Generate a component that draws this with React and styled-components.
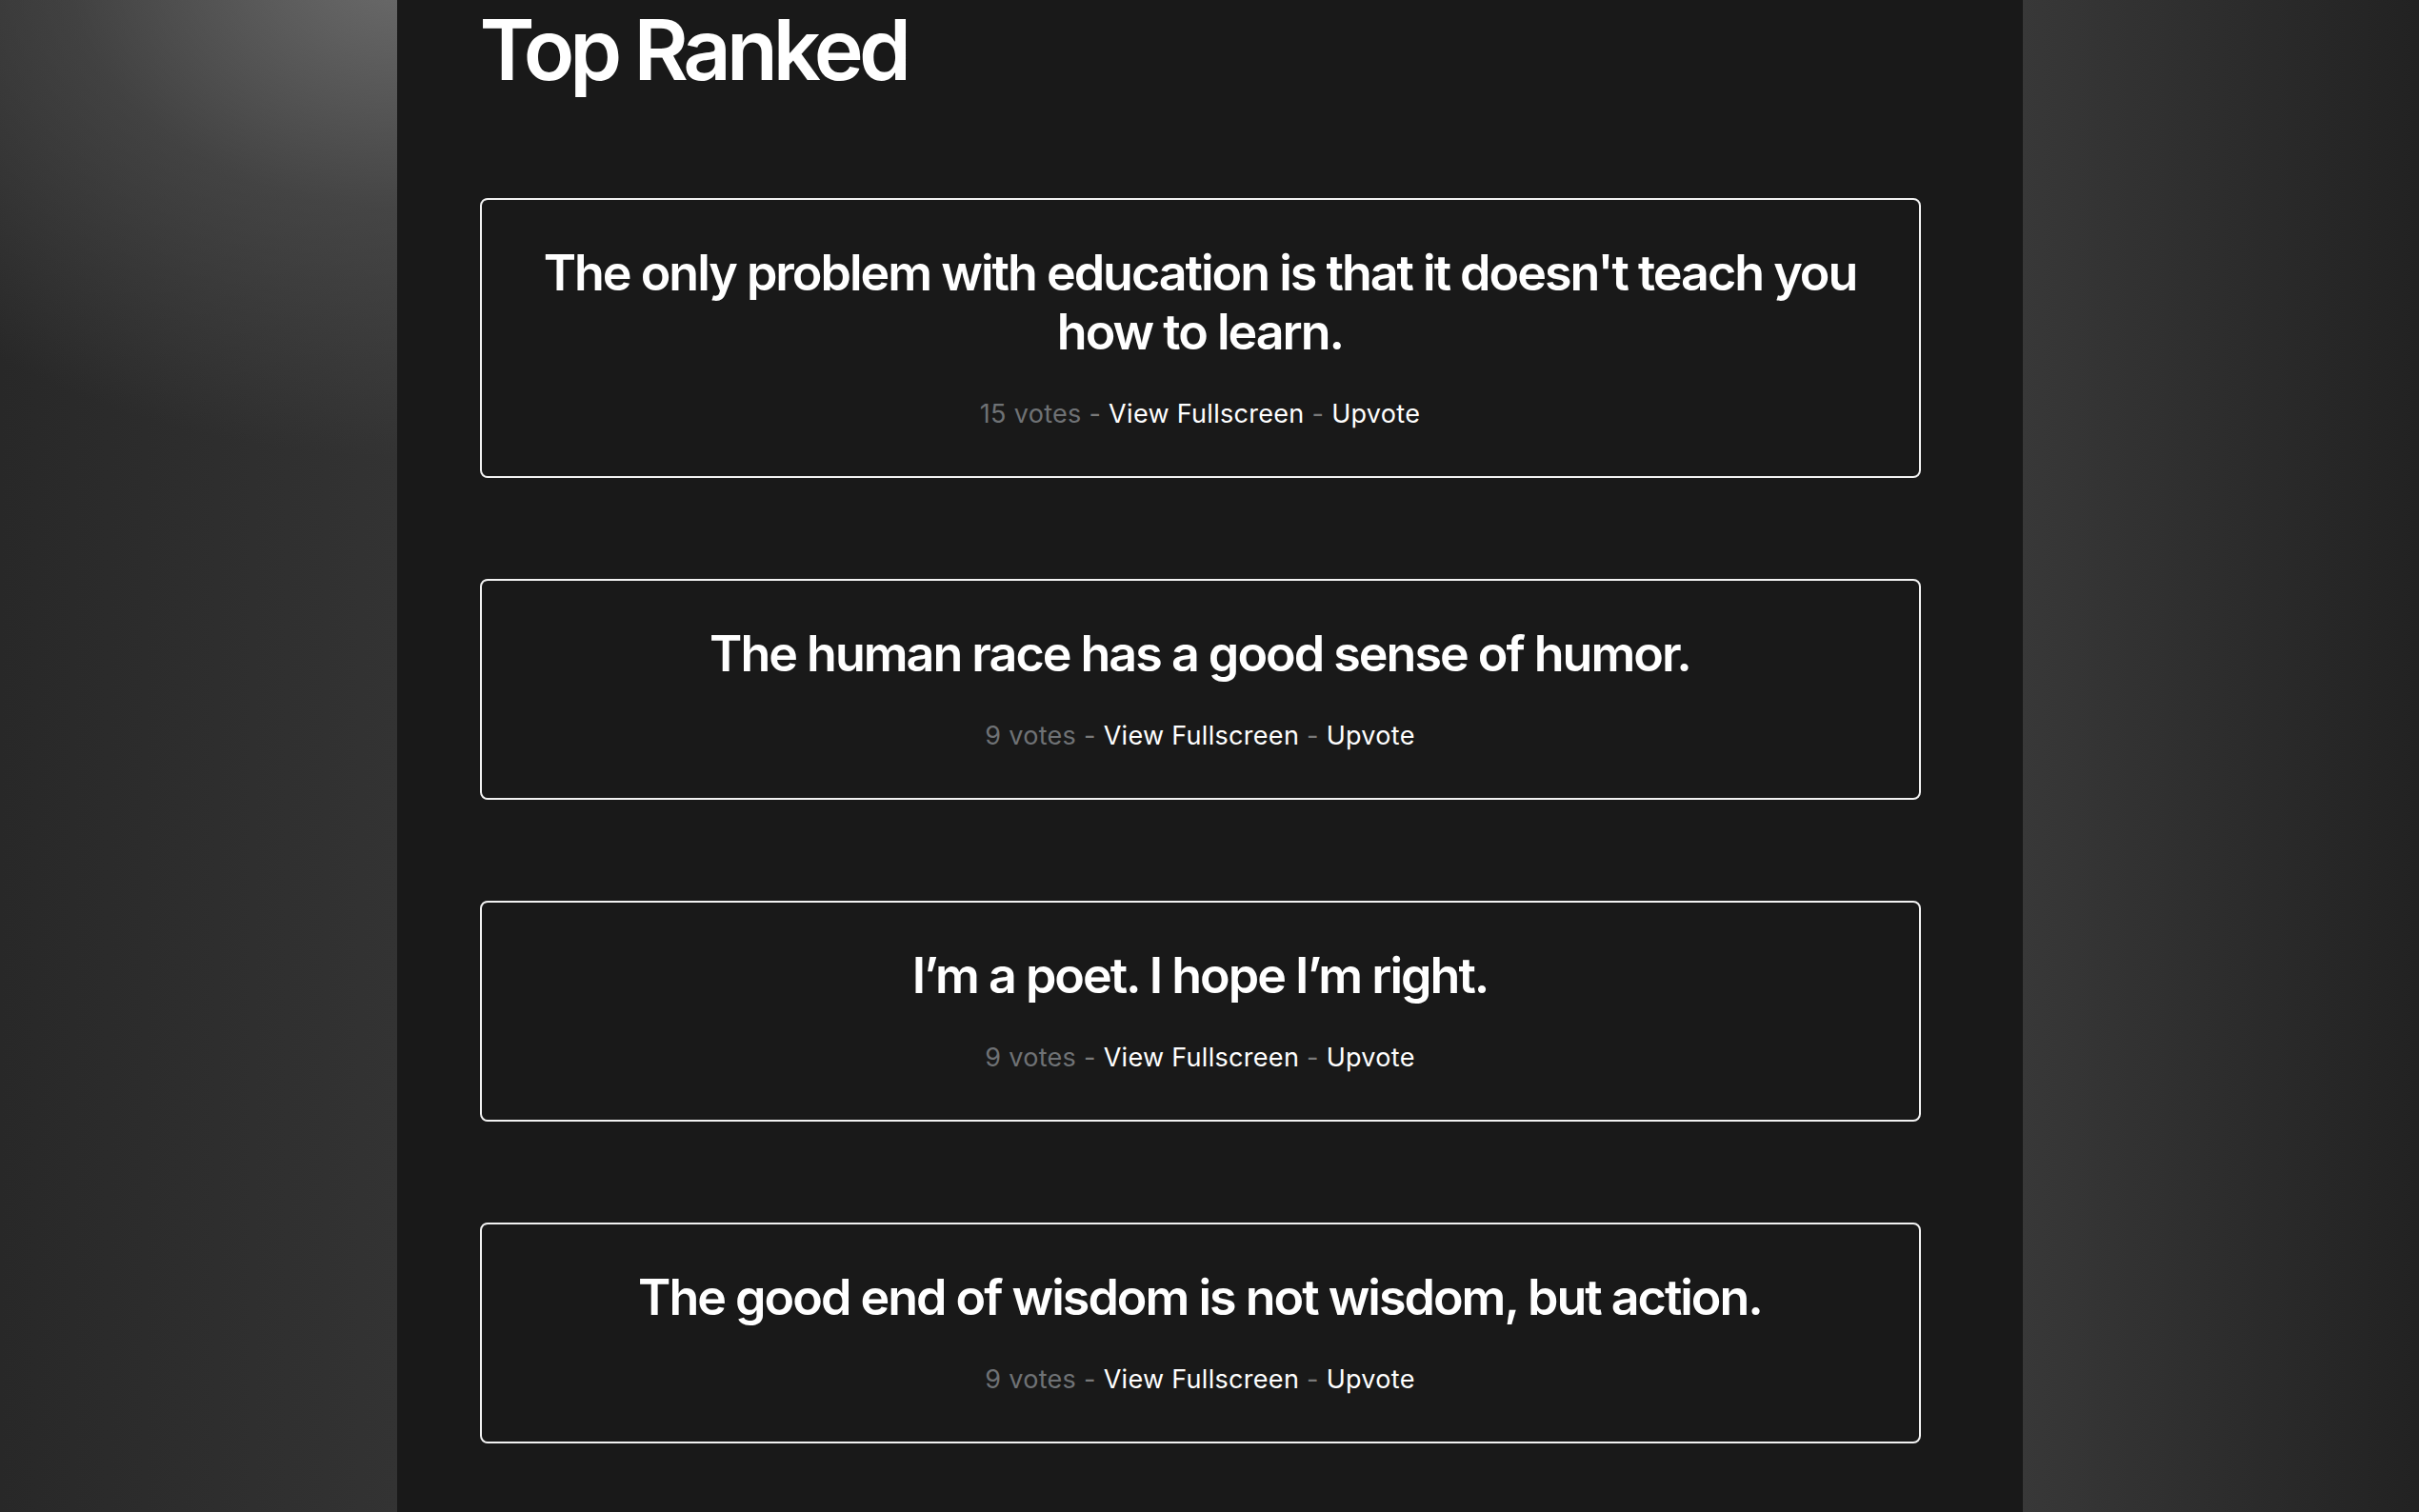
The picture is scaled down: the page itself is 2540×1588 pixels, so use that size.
import React from 'react';
import styled, { createGlobalStyle } from 'styled-components';

const GlobalStyle = createGlobalStyle`
  html, body {
    margin: 0;
    padding: 0;
  }
  body {
    min-height: 100vh;
    font-family: Inter, "Noto Sans", sans-serif;
    background:
      radial-gradient(720px 520px at 430px -40px, rgba(112,112,112,0.95) 0%, rgba(84,84,84,0.55) 50%, rgba(60,60,60,0) 100%),
      linear-gradient(90deg, #282828 0px, #333333 417px, #383838 2124px, #222222 2540px);
    background-attachment: fixed;
  }
`;

const Column = styled.main`
  width: 1707px;
  min-height: 100vh;
  margin: 0 auto;
  padding: 0 107px 60px 87px;
  box-sizing: border-box;
  background: #191919;
`;

const Title = styled.h1`
  margin: 0 0 102px;
  font-size: 88px;
  line-height: 1.2;
  font-weight: 600;
  letter-spacing: -5px;
  color: #ffffff;
`;

const List = styled.div`
  display: flex;
  flex-direction: column;
  gap: 106px;
`;

const Card = styled.article`
  border: 2px solid #f2f2f2;
  border-radius: 8px;
  padding: 46px 40px 45px;
  text-align: center;
`;

const Quote = styled.h2`
  margin: 0 0 35px;
  font-size: 52px;
  line-height: 62px;
  font-weight: 600;
  letter-spacing: -2px;
  color: #ffffff;
`;

const Meta = styled.div`
  font-size: 27px;
  line-height: 40px;
  letter-spacing: 0.3px;
  color: #7a7a7a;
`;

const Votes = styled.span`
  color: ${p => p.muted ? '#6f7275' : '#fff'};
`;

const Link = styled.a`
  color: #ffffff;
  text-decoration: none;
  cursor: pointer;
`;

const quotes = [
  { text: "The only problem with education is that it doesn't teach you how to learn.", votes: 15 },
  { text: 'The human race has a good sense of humor.', votes: 9 },
  { text: 'I’m a poet. I hope I’m right.', votes: 9 },
  { text: 'The good end of wisdom is not wisdom, but action.', votes: 9 },
];

function App() {
  return (
    <>
      <GlobalStyle />
      <Column>
        <Title>Top Ranked</Title>
        <List>
          {quotes.map(q => (
            <Card key={q.text}>
              <Quote>{q.text}</Quote>
              <Meta>
                <Votes muted>{q.votes} votes</Votes> - <Link>View Fullscreen</Link> - <Link>Upvote</Link>
              </Meta>
            </Card>
          ))}
        </List>
      </Column>
    </>
  );
}

export default App;
